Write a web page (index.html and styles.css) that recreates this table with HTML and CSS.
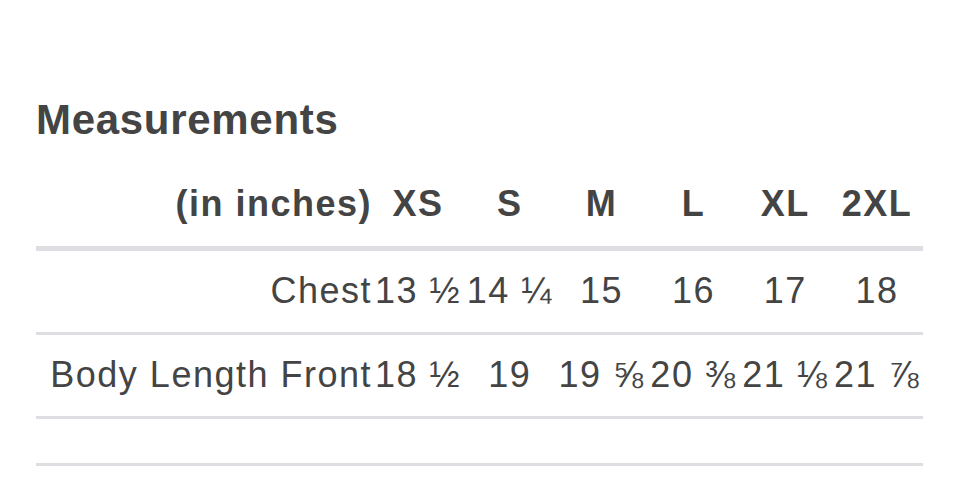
FILE: index.html
```html
<!DOCTYPE html>
<html>
<head>
<meta charset="utf-8">
<link rel="stylesheet" href="styles.css">
</head>
<body>
<div class="page">
  <h2 class="title">Measurements</h2>
  <table class="sizes">
    <colgroup>
      <col class="col-label">
      <col><col><col><col><col><col>
    </colgroup>
    <thead>
      <tr>
        <th class="label">(in inches)</th>
        <th>XS</th><th>S</th><th>M</th><th>L</th><th>XL</th><th>2XL</th>
      </tr>
    </thead>
    <tbody>
      <tr>
        <td class="label">Chest</td>
        <td>13 ½</td><td>14 ¼</td><td>15</td><td>16</td><td>17</td><td>18</td>
      </tr>
      <tr>
        <td class="label">Body Length Front</td>
        <td>18 ½</td><td>19</td><td>19 ⅝</td><td>20 ⅜</td><td>21 ⅛</td><td>21 ⅞</td>
      </tr>
      <tr class="empty">
        <td class="label"></td>
        <td></td><td></td><td></td><td></td><td></td><td></td>
      </tr>
    </tbody>
  </table>
</div>
</body>
</html>
```
FILE: styles.css
```css
html, body {
  margin: 0;
  padding: 0;
  background: #ffffff;
}
body {
  font-family: "Liberation Sans", Arial, sans-serif;
  color: #444444;
}
.page {
  padding: 96px 37px 0 36px;
}
.title {
  margin: 0 0 21px 0;
  font-size: 42px;
  line-height: 48px;
  font-weight: bold;
  letter-spacing: 0.7px;
  color: #444444;
}
.sizes {
  width: 100%;
  border-collapse: collapse;
  table-layout: fixed;
}
.col-label {
  width: 336px;
}
.sizes th,
.sizes td {
  padding: 22px 0;
  line-height: 37px;
  font-size: 36px;
  text-align: center;
  white-space: nowrap;
}
.sizes th {
  padding: 20px 0 24px 0;
  font-weight: bold;
  letter-spacing: 1.5px;
  border-bottom: 5px solid #dddde2;
}
.sizes td {
  padding: 21px 0 23px 0;
  font-weight: normal;
  letter-spacing: 1.5px;
  border-bottom: 3px solid #dddde2;
}
.sizes .label {
  text-align: right;
}
.sizes .empty td {
  height: 0;
}
```
